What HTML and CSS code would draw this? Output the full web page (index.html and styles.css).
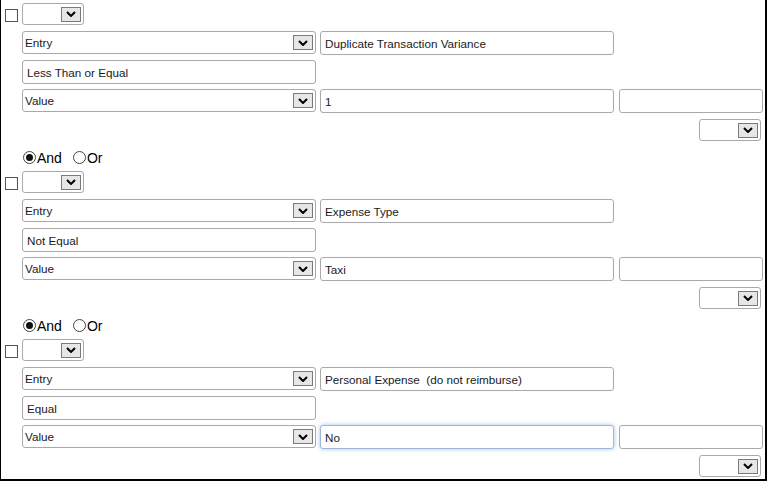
FILE: index.html
```html
<!DOCTYPE html>
<html>
<head>
<meta charset="utf-8">
<link rel="stylesheet" href="styles.css">
</head>
<body>
<div class="frame">
  <div class="block">
    <div class="row r1">
      <span class="check"></span>
      <div class="sel small"><span class="btn"><svg width="10" height="6" viewBox="0 0 10 6"><polyline points="1,1 5,5 9,1" /></svg></span></div>
    </div>
    <div class="row r2">
      <div class="sel wide"><span class="txt">Entry</span><span class="btn"><svg width="10" height="6" viewBox="0 0 10 6"><polyline points="1,1 5,5 9,1" /></svg></span></div>
      <div class="inp wide">Duplicate Transaction Variance</div>
    </div>
    <div class="row r3">
      <div class="inp wide">Less Than or Equal</div>
    </div>
    <div class="row r4">
      <div class="sel wide"><span class="txt">Value</span><span class="btn"><svg width="10" height="6" viewBox="0 0 10 6"><polyline points="1,1 5,5 9,1" /></svg></span></div>
      <div class="inp wide">1</div>
      <div class="inp narrow"></div>
    </div>
    <div class="row r5">
      <div class="sel small"><span class="btn"><svg width="10" height="6" viewBox="0 0 10 6"><polyline points="1,1 5,5 9,1" /></svg></span></div>
    </div>
    <div class="row r6">
      <span class="radio on"></span><span class="rl">And</span>
      <span class="radio"></span><span class="rl">Or</span>
    </div>
  </div>

  <div class="block">
    <div class="row r1">
      <span class="check"></span>
      <div class="sel small"><span class="btn"><svg width="10" height="6" viewBox="0 0 10 6"><polyline points="1,1 5,5 9,1" /></svg></span></div>
    </div>
    <div class="row r2">
      <div class="sel wide"><span class="txt">Entry</span><span class="btn"><svg width="10" height="6" viewBox="0 0 10 6"><polyline points="1,1 5,5 9,1" /></svg></span></div>
      <div class="inp wide">Expense Type</div>
    </div>
    <div class="row r3">
      <div class="inp wide">Not Equal</div>
    </div>
    <div class="row r4">
      <div class="sel wide"><span class="txt">Value</span><span class="btn"><svg width="10" height="6" viewBox="0 0 10 6"><polyline points="1,1 5,5 9,1" /></svg></span></div>
      <div class="inp wide">Taxi</div>
      <div class="inp narrow"></div>
    </div>
    <div class="row r5">
      <div class="sel small"><span class="btn"><svg width="10" height="6" viewBox="0 0 10 6"><polyline points="1,1 5,5 9,1" /></svg></span></div>
    </div>
    <div class="row r6">
      <span class="radio on"></span><span class="rl">And</span>
      <span class="radio"></span><span class="rl">Or</span>
    </div>
  </div>

  <div class="block">
    <div class="row r1">
      <span class="check"></span>
      <div class="sel small"><span class="btn"><svg width="10" height="6" viewBox="0 0 10 6"><polyline points="1,1 5,5 9,1" /></svg></span></div>
    </div>
    <div class="row r2">
      <div class="sel wide"><span class="txt">Entry</span><span class="btn"><svg width="10" height="6" viewBox="0 0 10 6"><polyline points="1,1 5,5 9,1" /></svg></span></div>
      <div class="inp wide">Personal Expense&nbsp; (do not reimburse)</div>
    </div>
    <div class="row r3">
      <div class="inp wide">Equal</div>
    </div>
    <div class="row r4">
      <div class="sel wide"><span class="txt">Value</span><span class="btn"><svg width="10" height="6" viewBox="0 0 10 6"><polyline points="1,1 5,5 9,1" /></svg></span></div>
      <div class="inp wide focus">No</div>
      <div class="inp narrow"></div>
    </div>
    <div class="row r5">
      <div class="sel small"><span class="btn"><svg width="10" height="6" viewBox="0 0 10 6"><polyline points="1,1 5,5 9,1" /></svg></span></div>
    </div>
  </div>
</div>
</body>
</html>
```
FILE: styles.css
```css
html, body {
  margin: 0;
  padding: 0;
  background: #fff;
}
.frame {
  box-sizing: border-box;
  width: 767px;
  height: 481px;
  border-left: 1px solid #000;
  border-right: 2px solid #000;
  border-bottom: 2px solid #000;
  background: #fff;
  font-family: "Liberation Sans", Arial, sans-serif;
  font-size: 11.7px;
  color: #1a1a1a;
  overflow: hidden;
}
.block {
  display: flex;
  flex-direction: column;
  padding-left: 21px;
}
.row {
  display: flex;
  align-items: flex-start;
}
.r1 { margin-top: 3px; height: 22px; margin-left: -17px; }
.r2 { margin-top: 6px; height: 24px; gap: 4px; }
.r3 { margin-top: 5px; height: 24px; }
.r4 { margin-top: 5px; height: 24px; gap: 4px; }
.r5 { margin-top: 6px; height: 22px; justify-content: flex-end; padding-right: 4px; }
.r6 { margin-top: 6px; height: 21px; align-items: center; font-size: 14px; color: #000; }

.check {
  box-sizing: border-box;
  width: 13px;
  height: 13px;
  border: 1px solid #555;
  background: #fff;
  margin-top: 6px;
  margin-right: 4px;
}
.sel {
  box-sizing: border-box;
  position: relative;
  border: 1px solid #a9a9a9;
  border-radius: 3px;
  background: #fff;
  display: flex;
  align-items: center;
}
.sel.small {
  width: 62px;
  height: 22px;
}
.sel.wide {
  width: 294px;
  height: 23px;
}
.txt {
  padding-left: 2px;
}
.btn {
  box-sizing: border-box;
  position: absolute;
  right: 2px;
  top: 50%;
  margin-top: -7.5px;
  width: 20px;
  height: 15px;
  border: 1px solid #7a7a7a;
  background: #e6e6e6;
  display: flex;
  align-items: center;
  justify-content: center;
}
.btn svg polyline {
  fill: none;
  stroke: #000;
  stroke-width: 2;
}
.inp {
  box-sizing: border-box;
  height: 24px;
  border: 1px solid #a9a9a9;
  border-radius: 3px;
  background: #fff;
  padding-left: 4px;
  display: flex;
  align-items: center;
  white-space: pre;
}
.inp.wide { width: 294px; }
.inp.narrow {
  width: 144px;
  margin-left: 1px;
}
.inp.focus {
  border-color: #9fb8d6;
  box-shadow: 0 0 4px rgba(90, 140, 210, 0.55);
}
.radio {
  box-sizing: border-box;
  width: 13px;
  height: 13px;
  border: 1px solid #444;
  border-radius: 50%;
  background: #fff;
  position: relative;
  margin-left: 1px;
}
.radio.on::after {
  content: "";
  position: absolute;
  left: 2px;
  top: 2px;
  width: 7px;
  height: 7px;
  border-radius: 50%;
  background: #111;
}
.rl {
  margin-left: 1px;
  margin-right: 10px;
}
```
